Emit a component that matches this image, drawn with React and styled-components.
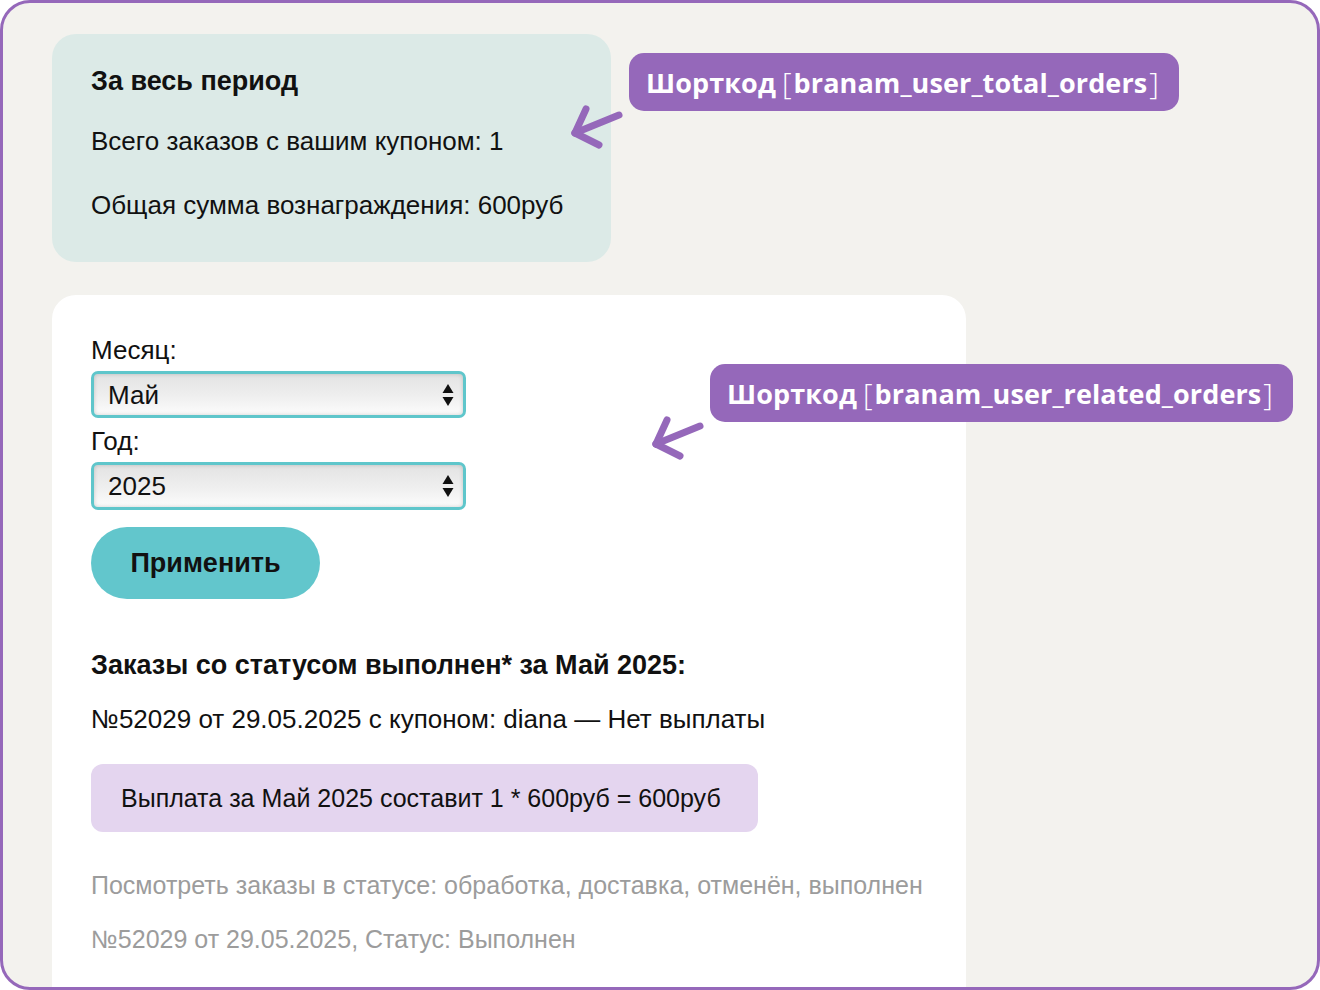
import React from "react";
import styled, { createGlobalStyle } from "styled-components";

const Global = createGlobalStyle`
  html, body { margin: 0; padding: 0; background: #ffffff; }
  * { box-sizing: border-box; }
`;

const Frame = styled.div`
  width: 1320px;
  height: 990px;
  position: relative;
  overflow: hidden;
  background: #f3f2ee;
  border: 3px solid #9568ba;
  border-radius: 30px;
  padding: 31px 49px 0;
  font-family: "Liberation Sans", "DejaVu Sans", sans-serif;
  color: #111;
`;

const Card = styled.div`
  background: ${(p) => (p.tone === "teal" ? "#dceae7" : "#ffffff")};
  width: ${(p) => p.w}px;
  border-radius: 24px;
  padding: ${(p) => p.pad};
  margin-bottom: 33px;
`;

const Line = styled.div`
  font-size: ${(p) => (p.bold ? 27 : p.muted ? 25 : 26)}px;
  line-height: 30px;
  height: 30px;
  white-space: nowrap;
  font-weight: ${(p) => (p.bold ? 700 : 400)};
  color: ${(p) => (p.muted ? "#9c9c9c" : "#111")};
  margin-top: ${(p) => p.mt || 0}px;
`;

const SelectWrap = styled.div`
  position: relative;
  width: 375px;
  height: ${(p) => p.h}px;
  margin-top: 6px;
`;

const Select = styled.select`
  appearance: none;
  -webkit-appearance: none;
  width: 100%;
  height: 100%;
  border: 3px solid #5fc6cb;
  border-radius: 7px;
  background: linear-gradient(#e3e3e3, #efefef 55%, #fcfcfc);
  box-shadow: inset 0 0 4px rgba(0, 0, 0, 0.18);
  padding: 0 14px;
  font-family: inherit;
  font-size: 26px;
  color: #111;
  outline: none;
`;

const SelectArrows = styled.svg`
  position: absolute;
  right: 12px;
  top: 50%;
  transform: translateY(-50%);
  pointer-events: none;
`;

const Button = styled.button`
  margin-top: 17px;
  width: 229px;
  height: 72px;
  border: none;
  border-radius: 36px;
  background: #62c6cc;
  font-family: inherit;
  font-size: 27px;
  font-weight: 700;
  color: #111;
  cursor: pointer;
`;

const Payout = styled.div`
  margin-top: 30px;
  width: 667px;
  height: 68px;
  border-radius: 12px;
  background: #e4d5ef;
  padding: 0 30px;
  display: flex;
  align-items: center;
  font-size: 25px;
  white-space: nowrap;
`;

const Tag = styled.div`
  position: absolute;
  left: ${(p) => p.x}px;
  top: ${(p) => p.y}px;
  height: 58px;
  padding: 0 20px 0 17px;
  display: flex;
  align-items: center;
  background: #9568ba;
  border-radius: 15px;
  color: #fff;
  font-family: "Open Sans", "Noto Sans", sans-serif;
  font-weight: 700;
  font-size: 27px;
  white-space: nowrap;
  letter-spacing: 0.1px;
`;

const Bracket = styled.span`
  font-weight: 300;
  font-size: 30px;
  margin: 0 2px 0 6px;
  &:last-child { margin: 0 0 0 2px; }
`;

const Arrow = styled.svg`
  position: absolute;
  left: ${(p) => p.x}px;
  top: ${(p) => p.y}px;
  overflow: visible;
`;

const Pointer = ({ x, y }) => (
  <Arrow x={x} y={y} width="50" height="42" viewBox="0 0 50 42">
    <g stroke="#9568ba" strokeWidth="7" strokeLinecap="round" fill="none">
      <path d="M47 8 L3 26" />
      <path d="M3 26 L14 2" />
      <path d="M3 26 L27 38" />
    </g>
  </Arrow>
);

const Arrows = () => (
  <SelectArrows width="12" height="24" viewBox="0 0 12 24">
    <path d="M6 1 L11.5 10 L0.5 10 Z" fill="#111" />
    <path d="M0.5 14 L11.5 14 L6 23 Z" fill="#111" />
  </SelectArrows>
);

const ShortcodeTag = ({ x, y, name }) => (
  <Tag x={x} y={y}>
    Шорткод<Bracket>[</Bracket>
    {name}
    <Bracket>]</Bracket>
  </Tag>
);

export default function App() {
  return (
    <>
      <Global />
      <Frame>
        <Card tone="teal" w={559} pad="32px 39px 42px">
          <Line bold>За весь период</Line>
          <Line mt={30}>Всего заказов с вашим купоном: 1</Line>
          <Line mt={34}>Общая сумма вознаграждения: 600руб</Line>
        </Card>

        <Card w={914} pad="40px 39px 60px">
          <Line>Месяц:</Line>
          <SelectWrap h={47}>
            <Select defaultValue="5">
              <option value="5">Май</option>
            </Select>
            <Arrows />
          </SelectWrap>
          <Line mt={8}>Год:</Line>
          <SelectWrap h={48}>
            <Select defaultValue="2025">
              <option value="2025">2025</option>
            </Select>
            <Arrows />
          </SelectWrap>
          <Button>Применить</Button>

          <Line bold mt={51}>Заказы со статусом выполнен* за Май 2025:</Line>
          <Line mt={24}>№52029 от 29.05.2025 с купоном: diana — Нет выплаты</Line>
          <Payout>Выплата за Май 2025 составит 1 * 600руб = 600руб</Payout>
          <Line muted mt={38}>Посмотреть заказы в статусе: обработка, доставка, отменён, выполнен</Line>
          <Line muted mt={24}>№52029 от 29.05.2025, Статус: Выполнен</Line>
        </Card>

        <ShortcodeTag x={626} y={50} name="branam_user_total_orders" />
        <Pointer x={569} y={104} />
        <ShortcodeTag x={707} y={361} name="branam_user_related_orders" />
        <Pointer x={650} y={415} />
      </Frame>
    </>
  );
}
